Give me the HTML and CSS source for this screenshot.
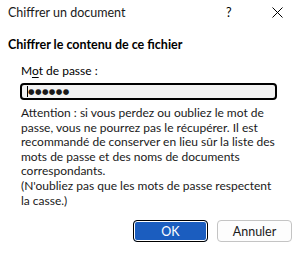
FILE: index.html
```html
<!DOCTYPE html>
<html lang="fr">
<head>
    <meta charset="UTF-8">
    <title>Chiffrer un document</title>
    <link rel="stylesheet" href="styles.css">
</head>
<body>
    <div class="dialog">
        <div class="titlebar">
            <span class="title">Chiffrer un document</span>
            <span class="help">?</span>
            <span class="close">
                <svg width="11" height="11" viewBox="0 0 11 11">
                    <path d="M0.5 0.5 L10.5 10.5 M10.5 0.5 L0.5 10.5" stroke="#000" stroke-width="1" fill="none"/>
                </svg>
            </span>
        </div>

        <h1 class="heading">Chiffrer le contenu de ce fichier</h1>

        <div class="body">
            <label class="label">M<u>o</u>t de passe :</label>
            <div class="field"><span class="caret"></span><span class="dots">●●●●●●</span></div>
            <p class="note">Attention : si vous perdez ou oubliez le mot de passe, vous ne pourrez pas le récupérer. Il est recommandé de conserver en lieu sûr la liste des mots de passe et des noms de documents correspondants.<br>(N'oubliez pas que les mots de passe respectent la casse.)</p>
        </div>

        <div class="buttons">
            <button class="btn btn-ok">OK</button>
            <button class="btn">Annuler</button>
        </div>
    </div>
</body>
</html>
```

FILE: styles.css
```css
* {
    margin: 0;
    padding: 0;
    box-sizing: border-box;
}

body {
    background: #fff;
    font-family: 'Lato', 'Noto Sans', sans-serif;
    font-size: 12px;
    color: #000;
}

.dialog {
    width: 298px;
    height: 253px;
}

/* Title bar */
.titlebar {
    height: 24px;
    display: flex;
    align-items: center;
    padding-left: 8px;
    font-size: 12.5px;
}

.title {
    flex: 1;
    color: #1a1a1a;
}

.help {
    width: 14px;
    margin-right: 32px;
}

.close {
    display: flex;
    margin-right: 15px;
}

/* Heading */
.heading {
    font-size: 12.5px;
    font-weight: bold;
    padding: 10px 0 0 8px;
    line-height: 22px;
}

/* Body */
.body {
    padding: 0 21px 0 21px;
}

.label {
    display: block;
    margin-top: 7px;
    line-height: 16px;
}

.label u {
    text-underline-offset: 2px;
}

.field {
    margin: 4px 0 0 -1px;
    width: 257px;
    height: 17px;
    border: 2px solid #000;
    border-radius: 4px;
    background: #f2f2f2;
    padding-left: 5px;
    display: flex;
    align-items: center;
    color: #1a1a1a;
}

.caret {
    width: 1px;
    height: 11px;
    background: #000;
}

.dots {
    font-family: 'DejaVu Sans', sans-serif;
    font-size: 7.5px;
    letter-spacing: 0.4px;
    line-height: 11px;
}

.note {
    margin-top: 6px;
    line-height: 14.6px;
    color: #1a1a1a;
}

/* Buttons */
.buttons {
    display: flex;
    justify-content: flex-end;
    gap: 9px;
    padding: 12px 6px 0 0;
}

.btn {
    width: 75px;
    height: 22px;
    font-family: inherit;
    font-size: 12.5px;
    background: #fdfdfd;
    border: 1px solid #c4c4c4;
    border-radius: 4px;
    color: #1a1a1a;
}

.btn-ok {
    background: #1b5dbf;
    border: 1px solid #000;
    box-shadow: inset 0 0 0 1px #fff;
    color: #fff;
}
```
